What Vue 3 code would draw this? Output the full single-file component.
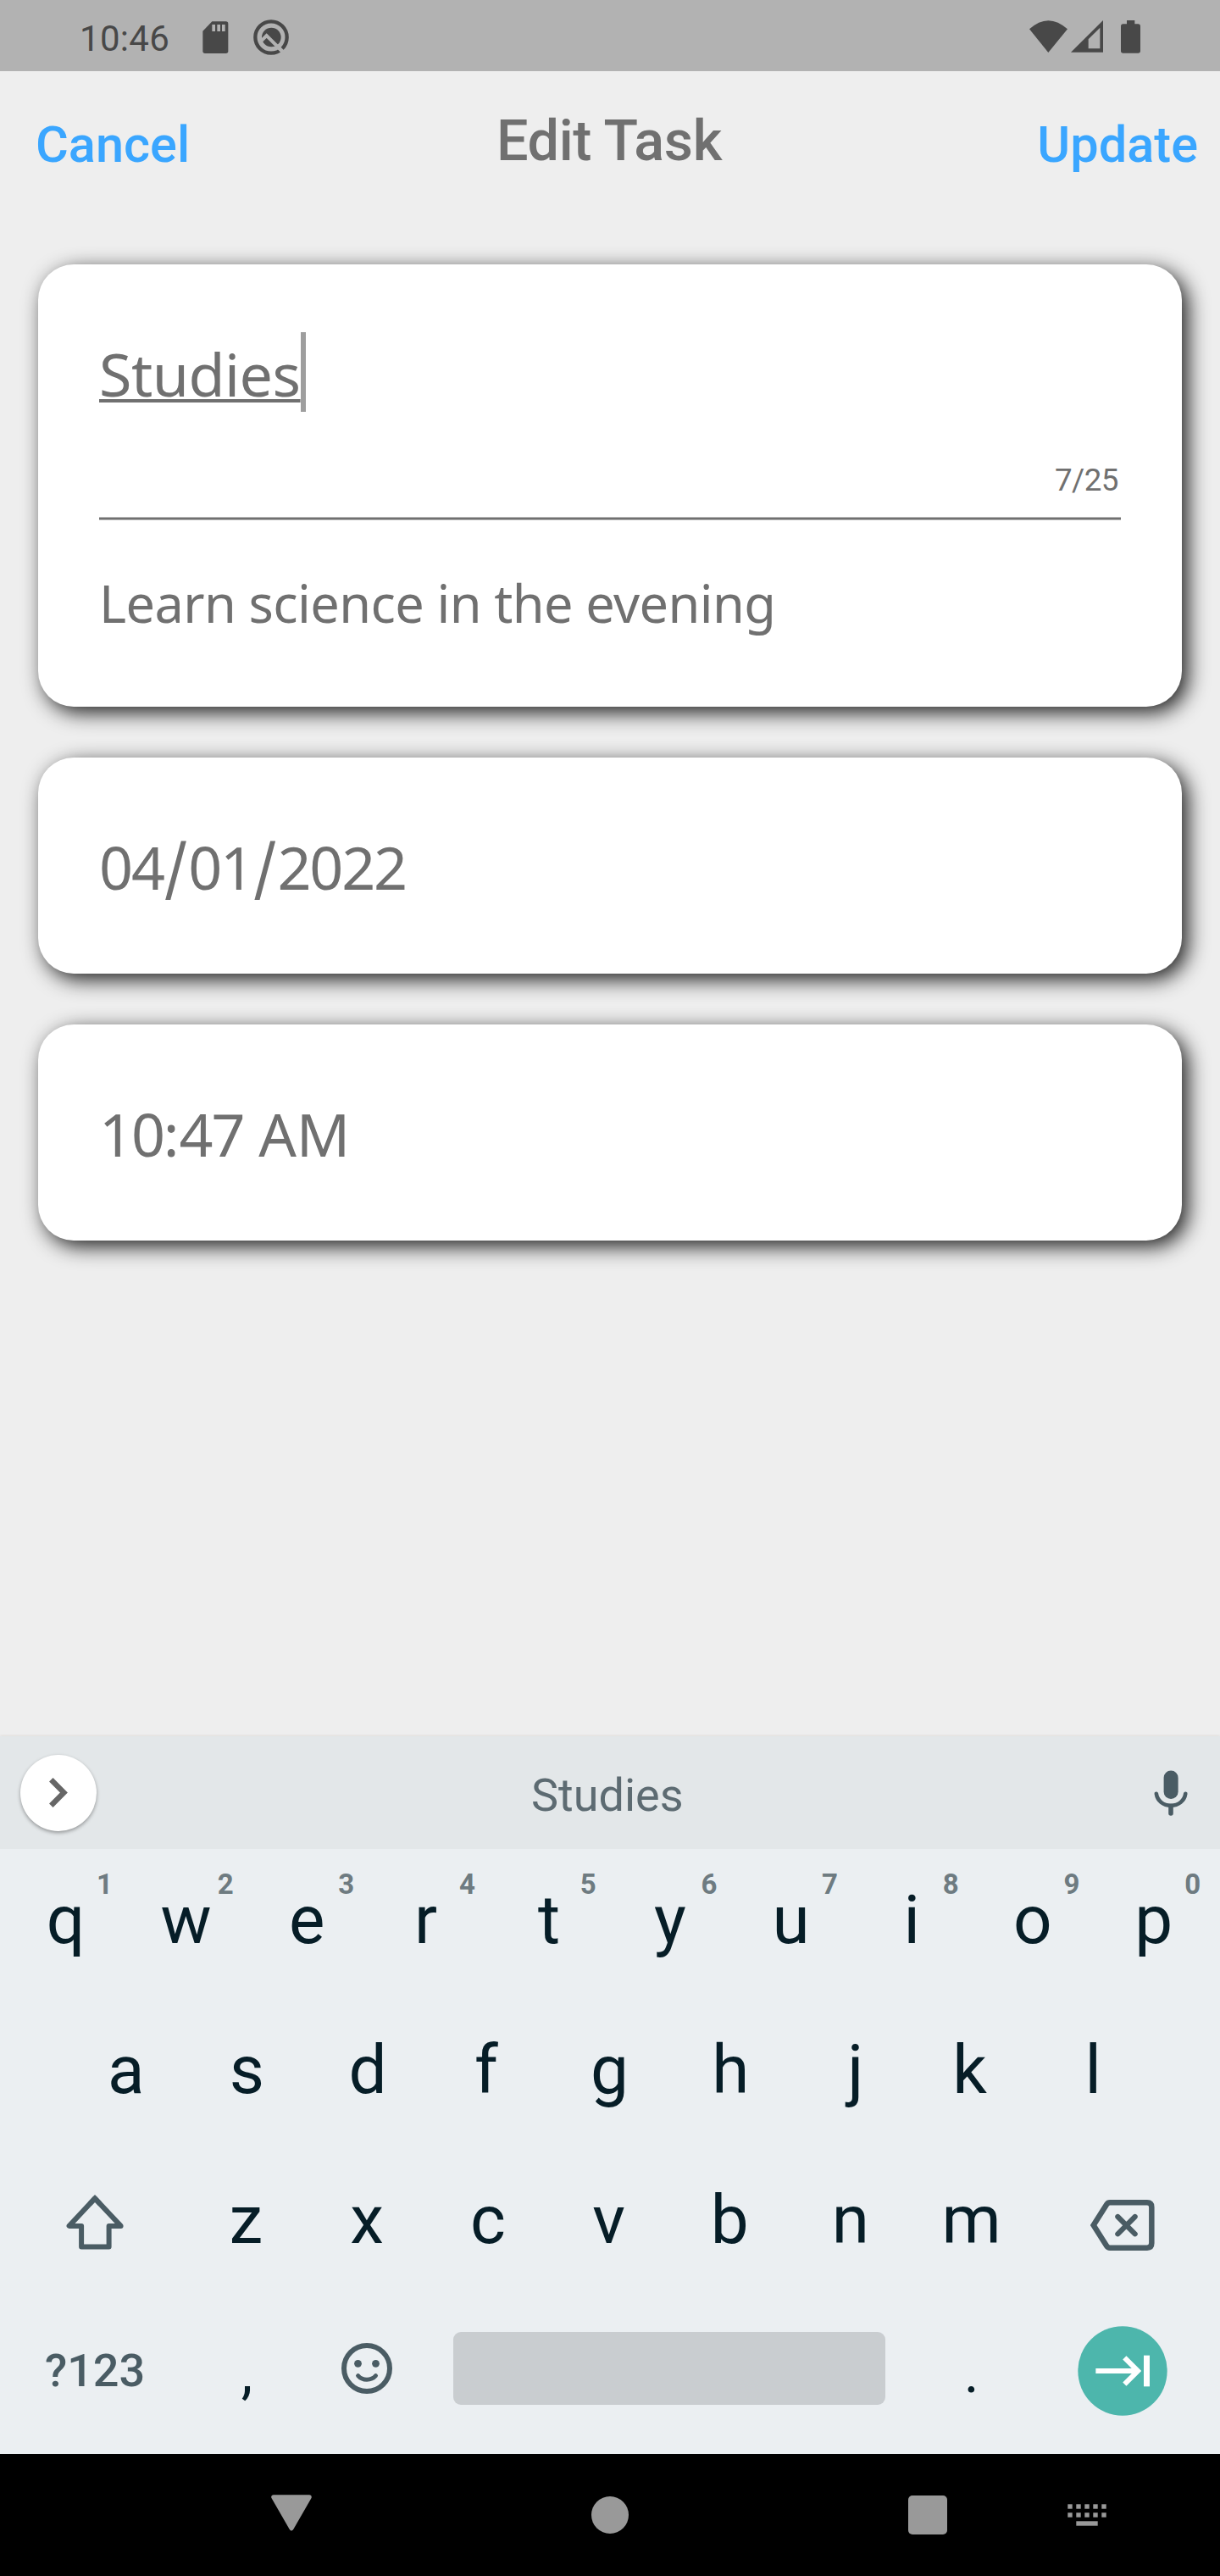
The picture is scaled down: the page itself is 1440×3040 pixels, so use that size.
<script setup>
const nudge = { w: -1, e: -1, r: -6, f: -6, k: -6, j: 10, u: 0, o: 0 }
const indent = (letter) => ({ textIndent: `${nudge[letter] ?? 0}px` })

const topRow = 'qwertyuiop'.split('').map((letter, i) => ({ letter, hint: (i + 1) % 10 }))
const middleRow = 'asdfghjkl'.split('')
const bottomRow = 'zxcvbnm'.split('')
const cols = [0, 1, 2, 3, 4]
</script>

<template>
  <div class="screen">
    <div class="status">
      <span class="clock">10:46</span>
      <svg class="sd" width="31" height="38" viewBox="716 74 93 114">
        <path fill="#484848" d="M750 75H799Q807 75 807 83V180Q807 188 799 188H725Q717 188 717 180V109Z" />
        <path fill="#b2b2b2" d="M750 86h11v24h-11zM768 86h11v24h-11zM785 86h11v24h-11z" />
      </svg>
      <svg class="quick" width="42" height="42" viewBox="897 68 126 126">
        <circle cx="960" cy="131" r="56" fill="none" stroke="#484848" stroke-width="13" />
        <circle cx="961" cy="131" r="34" fill="#484848" />
        <path d="M924 145L944 125L1012 193" fill="none" stroke="#b2b2b2" stroke-width="12" />
        <path d="M984 165L1010 191" stroke="#b2b2b2" stroke-width="13" />
      </svg>
      <span class="grow"></span>
      <svg class="wifi" width="45" height="38" viewBox="765 70 135 114">
        <path fill="#484848" d="M765 101Q832 40 900 101L832 184Z" />
      </svg>
      <svg class="signal" width="38" height="38" viewBox="911 72 114 114">
        <path fill="#484848" fill-rule="evenodd" d="M911 185L1025 72V185ZM973 139V172H1014V98Z" />
      </svg>
      <svg class="battery" width="23" height="39" viewBox="1089 72 69 117">
        <path fill="#484848" d="M1110 72H1138V85H1150Q1158 85 1158 93V181Q1158 188 1150 188H1097Q1089 188 1089 181V93Q1089 85 1097 85H1110Z" />
      </svg>
    </div>

    <header class="header">
      <span class="action cancel">Cancel</span>
      <h1 class="title">Edit Task</h1>
      <span class="action update">Update</span>
    </header>

    <main class="cards">
      <section class="card details">
        <div class="name"><span class="name-text">Studies</span><i class="caret"></i></div>
        <div class="counter">7/25</div>
        <div class="rule"></div>
        <div class="description">Learn science in the evening</div>
      </section>
      <section class="card field">
        <span class="num">04</span><span class="slash">/</span><span class="num">01</span><span class="slash">/</span><span class="num">2022</span>
      </section>
      <section class="card field">
        <span class="num">10</span><span>:</span><span class="num">47</span><span class="meridiem">&nbsp;AM</span>
      </section>
    </main>

    <div class="suggestions">
      <span class="expand">
        <svg width="90" height="90" viewBox="24 2071 90 90">
          <path d="M60.3 2100.2L75.4 2115.5L60.3 2130.8" fill="none" stroke="#666" stroke-width="6.4" />
        </svg>
      </span>
      <span class="suggestion">Studies</span>
      <svg class="mic" width="40" height="54" viewBox="1361.4 2088.5 40 54" fill="none" stroke="#4a5c64" stroke-linecap="round">
        <rect x="1373" y="2089" width="17" height="33.4" rx="8.5" fill="#4a5c64" stroke="none" />
        <path d="M1364.2 2116.2C1365.5 2125 1372.5 2130.2 1381.4 2130.2S1397.4 2125 1398.7 2116.2" stroke-width="4.6" />
        <path d="M1381.4 2131V2139.5" stroke-width="5.6" />
      </svg>
    </div>

    <div class="keyboard">
      <div class="row">
        <span v-for="k in topRow" :key="k.letter" class="key" :style="indent(k.letter)">{{ k.letter }}<sup class="hint">{{ k.hint }}</sup></span>
      </div>
      <div class="row">
        <span v-for="k in middleRow" :key="k" class="key" :style="indent(k)">{{ k }}</span>
      </div>
      <div class="row lower">
        <span class="side shift">
          <svg width="70" height="67" viewBox="78 2589 70 67" fill="none" stroke="#4a5c64" stroke-width="6">
            <path stroke-linejoin="round" d="M113 2594.4L82.6 2626.9H97.1V2651.6H129.6V2626.9H143.6Z" />
            <path d="M107 2600.8L113 2594.4L119 2600.8" />
          </svg>
        </span>
        <span v-for="k in bottomRow" :key="k" class="key">{{ k }}</span>
        <span class="side delete">
          <svg width="78" height="62" viewBox="979 165 234 186" fill="none" stroke="#4a5c64" stroke-width="19.5">
            <path d="M993 258L1040 184Q1044 178 1051 178H1183Q1199 178 1199 194V322Q1199 338 1183 338H1051Q1044 338 1040 332Z" />
            <path stroke-width="18.5" stroke-linecap="round" d="M1079 228L1140 289M1140 228L1079 289" />
          </svg>
        </span>
      </div>
      <div class="row lower">
        <span class="side symbols">?123</span>
        <span class="key punct comma">,</span>
        <span class="key icon">
          <svg width="62" height="62" viewBox="402 2764 62 62" fill="none" stroke="#4a5c64">
            <circle cx="433" cy="2795" r="27" stroke-width="6" />
            <circle cx="422.5" cy="2789.3" r="4.4" fill="#4a5c64" stroke="none" />
            <circle cx="443.5" cy="2789.3" r="4.4" fill="#4a5c64" stroke="none" />
            <path d="M422.6 2803.6Q426.5 2808.2 433 2808.2T443.5 2803.6" stroke-width="5" stroke-linecap="round" />
          </svg>
        </span>
        <span class="space-slot"><i class="space"></i></span>
        <span class="key punct">.</span>
        <span class="side enter">
          <svg width="106" height="106" viewBox="939 615 318 318">
            <circle cx="1098" cy="774" r="158" fill="#4db6ac" />
            <path fill="none" stroke="#fff" stroke-width="18" d="M1003 774H1150M1105 727L1152 774L1105 821" />
            <path fill="#fff" d="M1173 719h21v110h-21z" />
          </svg>
        </span>
      </div>
    </div>

    <nav class="nav">
      <svg class="back" width="48" height="43" viewBox="0 0 48 43">
        <path d="M3 3H45L24 39.5Z" fill="#999" stroke="#999" stroke-width="5.5" stroke-linejoin="round" />
      </svg>
      <i class="home"></i>
      <i class="recent"></i>
      <svg class="ime" width="46" height="26" viewBox="0 0 46 26" fill="#999">
        <template v-for="c in cols" :key="c">
          <rect :x="c * 10 + 0.3" y="0.3" width="5.4" height="5.4" />
          <rect :x="c * 10 + 0.3" y="10.3" width="5.4" height="5.4" />
        </template>
        <rect x="10.3" y="20.3" width="25.4" height="5.4" />
      </svg>
    </nav>
  </div>
</template>

<style>
body { margin: 0; }
</style>

<style scoped>
.screen {
  width: 1440px;
  height: 3040px;
  display: flex;
  flex-direction: column;
  overflow: hidden;
  background: #eee;
  font-family: Roboto, "Liberation Sans", sans-serif;
}
svg { display: block; flex: none; }

.status {
  height: 84px;
  flex: none;
  box-sizing: border-box;
  display: flex;
  align-items: flex-start;
  padding: 0 94px;
  background: #b2b2b2;
}
.clock {
  width: 145px;
  margin-top: 21px;
  font-size: 42px;
  line-height: 49px;
  letter-spacing: 0.3px;
  color: #484848;
}
.sd { margin-top: 25px; }
.quick { margin: 22.5px 0 0 29px; }
.grow { flex: 1; }
.wifi { margin-top: 23.5px; }
.signal { margin: 24px 0 0 4px; }
.battery { margin: 24px 0 0 21px; }

.header {
  height: 228px;
  flex: none;
  display: grid;
  grid-template-columns: 1fr auto 1fr;
  align-items: start;
}
.action {
  margin-top: 52px;
  font-size: 59.5px;
  line-height: 70px;
  font-weight: 500;
  color: #3aa6ff;
}
.cancel { padding-left: 42px; }
.update { padding-right: 26px; text-align: right; }
.title {
  margin: 43px 2px 0 0;
  font-size: 66.5px;
  line-height: 78px;
  font-weight: 500;
  letter-spacing: -0.4px;
  color: #707070;
}

.cards {
  flex: 1;
  display: flex;
  flex-direction: column;
  gap: 60px;
  padding: 0 45px;
  font-family: "Noto Sans", sans-serif;
  color: #707070;
}
.card {
  box-sizing: border-box;
  border-radius: 42px;
  padding: 0 72px;
  background: #fff;
  box-shadow: 7px 7px 24px rgba(0, 0, 0, 0.87);
}
.details { height: 522px; padding-top: 80px; }
.name { display: flex; height: 94px; }
.name-text {
  font-size: 70px;
  line-height: 98px;
  letter-spacing: -0.5px;
  text-decoration: underline;
  text-decoration-thickness: 3.5px;
  text-underline-offset: 3px;
  text-decoration-skip-ink: none;
}
.caret { width: 6px; height: 94px; background: #9e9e9e; }
.counter {
  margin-top: 59px;
  padding-right: 3px;
  font: 36.75px/43px Roboto, "Liberation Sans", sans-serif;
  letter-spacing: -0.5px;
  text-align: right;
}
.rule {
  margin-top: 22px;
  height: 2px;
  border: solid #b8b8b8;
  border-width: 1px 0;
  background: #707070;
}
.description {
  margin-top: 56px;
  font-size: 61.25px;
  line-height: 83px;
  letter-spacing: -0.6px;
  white-space: nowrap;
}
.field {
  height: 255px;
  display: flex;
  padding-top: 2px;
  font-size: 70px;
  line-height: 255px;
}
.num { letter-spacing: -2.15px; }
.slash {
  margin: 0 1.7px;
  height: 255px;
  transform: scaleY(1.39);
  transform-origin: 50% 124px;
}
.meridiem { letter-spacing: -0.2px; }

.suggestions {
  height: 133px;
  flex: none;
  box-sizing: border-box;
  display: grid;
  grid-template-columns: 90px 1fr 40px;
  align-items: center;
  padding: 0 38.5px 0 24px;
  background: #e3e7e9;
  box-shadow: 0 0 3px rgba(150, 130, 110, 0.25);
}
.expand {
  width: 90px;
  height: 90px;
  border-radius: 50%;
  background: #fff;
  box-shadow: 0 2px 4px rgba(0, 0, 0, 0.35);
}
.suggestion {
  padding: 6px 42px 0 0;
  font-size: 54px;
  line-height: 63px;
  text-align: center;
  color: #5d6b72;
}

.keyboard {
  height: 714px;
  flex: none;
  box-sizing: border-box;
  padding: 0 7px 0 6px;
  background: #ebeff2;
  color: #061d27;
}
.row { display: flex; justify-content: center; height: 177px; }
.lower { padding-right: 2px; }
.key {
  position: relative;
  width: 142.7px;
  flex: none;
  font-size: 80px;
  line-height: 169px;
  text-align: center;
}
.hint {
  position: absolute;
  top: 25px;
  left: calc(50% + 36.5px);
  width: 19px;
  font-size: 33px;
  line-height: 33px;
  font-weight: 700;
  text-align: center;
  text-indent: 0;
  color: #6e7b81;
}
.side { width: 214px; flex: none; display: flex; justify-content: center; align-items: flex-start; }
.shift svg { margin-top: 53px; }
.delete svg { margin-top: 59px; }
.symbols {
  padding-top: 53px;
  box-sizing: border-box;
  font-size: 54px;
  line-height: 63px;
  font-weight: 500;
  color: #4a5c64;
}
.punct { font-size: 68px; line-height: 174px; }
.comma { text-indent: 2px; }
.icon { display: flex; justify-content: center; align-items: flex-start; }
.icon svg { margin-top: 51px; }
.space-slot { width: 570.8px; flex: none; display: flex; justify-content: center; align-items: flex-start; }
.space { width: 510px; height: 86px; margin-top: 39px; border-radius: 9px; background: #c9cdd0; }
.enter svg { margin-top: 32px; }

.nav {
  height: 144px;
  flex: none;
  display: flex;
  align-items: center;
  padding-left: 320px;
  background: #000;
}
.back { margin-bottom: 6px; }
.home { width: 44px; height: 44px; margin-left: 330px; border-radius: 50%; background: #999; }
.recent { width: 46px; height: 46px; margin-left: 330px; border-radius: 5px; background: #999; }
.ime { margin-left: 142px; }
</style>
